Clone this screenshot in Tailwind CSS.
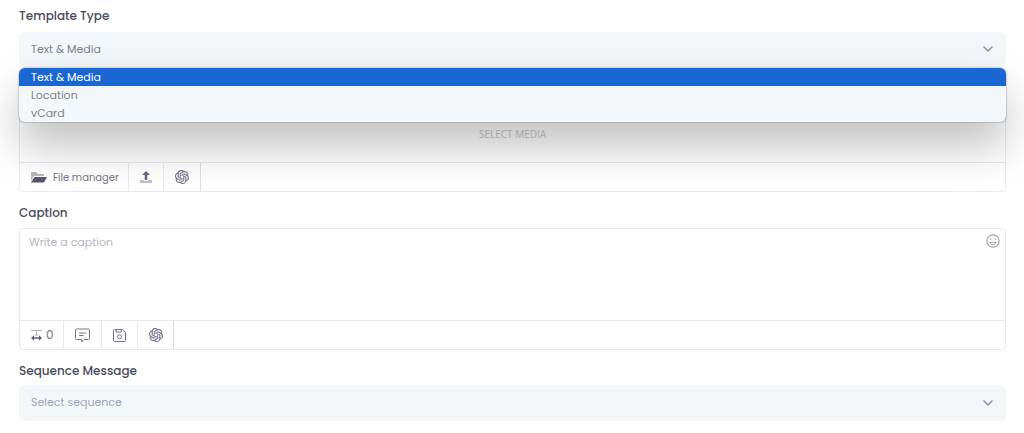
<!DOCTYPE html>
<html lang="en">
<head>
<meta charset="utf-8">
<meta name="viewport" content="width=device-width, initial-scale=1">
<title>Template editor</title>
<script src="https://cdn.jsdelivr.net/npm/@tailwindcss/browser@4"></script>
</head>
<body class="bg-white font-['Poppins','Inter',sans-serif] text-[11px] text-[#7e8299]">
<svg class="hidden" aria-hidden="true">
  <symbol id="knot" viewBox="0 0 24 24"><path fill="currentColor" stroke="currentColor" stroke-width=".4" d="M22.2819 9.8211a5.9847 5.9847 0 0 0-.5157-4.9108 6.0462 6.0462 0 0 0-6.5098-2.9A6.0651 6.0651 0 0 0 4.9807 4.1818a5.9847 5.9847 0 0 0-3.9977 2.9 6.0462 6.0462 0 0 0 .7427 7.0966 5.98 5.98 0 0 0 .511 4.9107 6.051 6.051 0 0 0 6.5146 2.9001A5.9847 5.9847 0 0 0 13.2599 24a6.0557 6.0557 0 0 0 5.7718-4.2058 5.9894 5.9894 0 0 0 3.9977-2.9001 6.0557 6.0557 0 0 0-.7475-7.0729zm-9.022 12.6081a4.4755 4.4755 0 0 1-2.8764-1.0408l.1419-.0804 4.7783-2.7582a.7948.7948 0 0 0 .3927-.6813v-6.7369l2.02 1.1686a.071.071 0 0 1 .038.052v5.5826a4.504 4.504 0 0 1-4.4945 4.4944zm-9.6607-4.1254a4.4708 4.4708 0 0 1-.5346-3.0137l.142.0852 4.783 2.7582a.7712.7712 0 0 0 .7806 0l5.8428-3.3685v2.3324a.0804.0804 0 0 1-.0332.0615L9.74 19.9502a4.4992 4.4992 0 0 1-6.1408-1.6464zM2.3408 7.8956a4.485 4.485 0 0 1 2.3655-1.9728V11.6a.7664.7664 0 0 0 .3879.6765l5.8144 3.3543-2.0201 1.1685a.0757.0757 0 0 1-.071 0l-4.8303-2.7865A4.504 4.504 0 0 1 2.3408 7.872zm16.5963 3.8558L13.1038 8.364 15.1192 7.2a.0757.0757 0 0 1 .071 0l4.8303 2.7913a4.4944 4.4944 0 0 1-.6765 8.1042v-5.6772a.79.79 0 0 0-.407-.667zm2.0107-3.0231l-.142-.0852-4.7735-2.7818a.7759.7759 0 0 0-.7854 0L9.409 9.2297V6.8974a.0662.0662 0 0 1 .0284-.0615l4.8303-2.7866a4.4992 4.4992 0 0 1 6.6802 4.66zM8.3065 12.863l-2.02-1.1638a.0804.0804 0 0 1-.038-.0567V6.0742a4.4992 4.4992 0 0 1 7.3757-3.4537l-.142.0805L8.704 5.459a.7948.7948 0 0 0-.3927.6813zm1.0976-2.3654l2.602-1.4998 2.6069 1.4998v2.9994l-2.5974 1.4997-2.6067-1.4997Z"/></symbol>
  <symbol id="chevron" viewBox="0 0 10 10"><path d="M1 3l4 4 4-4" fill="none" stroke="currentColor" stroke-width="1.5" stroke-linecap="round" stroke-linejoin="round"/></symbol>
</svg>
<form class="flex flex-col pt-2 pr-[18px] pb-3 pl-[19px]">
  <section class="relative">
    <label for="type" class="block text-xs leading-4 font-medium text-[#4b4b5c]">Template Type</label>
    <div class="relative mt-2">
      <select id="type" class="block h-[35px] w-full appearance-none rounded-md bg-[#f4f7fa] px-3 pb-px text-[#7e7f8f] outline-none">
        <option>Text &amp; Media</option><option>Location</option><option>vCard</option>
      </select>
      <svg class="pointer-events-none absolute top-3 right-[13px] size-[10px] text-[#8a8da5]"><use href="#chevron"/></svg>
      <ul role="listbox" aria-label="Template Type" class="absolute inset-x-0 top-full z-10 mt-px overflow-hidden rounded-md bg-[#f4f7fa] leading-[18px] text-[#7e7f8f] shadow-[0_0_2px_rgba(0,0,0,0.5),0_24px_44px_rgba(0,0,0,0.25)]">
        <li role="option" aria-selected="true" class="bg-[#1a66d2] px-3 text-white">Text &amp; Media</li>
        <li role="option" aria-selected="false" class="px-3">Location</li>
        <li role="option" aria-selected="false" class="px-3">vCard</li>
      </ul>
    </div>
  </section>

  <section class="mt-[39px] rounded border border-[#e8e8ee]">
    <div class="flex h-[55px] items-center justify-center font-['Open_Sans',sans-serif] text-[10px] text-[#c9c9ce]">SELECT MEDIA</div>
    <div class="flex h-[29px] border-t border-[#e8e8ee]">
      <button type="button" class="flex w-[109px] items-center gap-1.5 border-r border-[#e8e8ee] pl-[11px] text-[10px] whitespace-nowrap text-[#77788a]">
        <svg class="h-3 w-4 shrink-0" viewBox="0 0 16 12"><path d="M0 10V1h5l2 2h6v2H3z" fill="#b9b9c4"/><path d="M3.5 6H16l-3 5.5H0z" fill="#56566e"/></svg>
        File manager
      </button>
      <button type="button" aria-label="Upload" class="flex w-[35px] items-center justify-center border-r border-[#e8e8ee]">
        <svg class="size-3" viewBox="0 0 12 12"><path d="M0 9h4v1h4V9h4v3H0z" fill="#c2c2cc"/><path d="M6 0l4 4H7.3v5H4.7V4H2z" fill="#6a6a80"/></svg>
      </button>
      <button type="button" aria-label="Generate media with AI" class="flex w-[37px] items-center justify-center border-r border-[#dedee8] text-[#74748a]"><svg class="size-3.5"><use href="#knot"/></svg></button>
    </div>
  </section>

  <section class="mt-[13px]">
    <label for="caption" class="block text-xs leading-4 font-medium text-[#4b4b5c]">Caption</label>
    <div class="mt-[7px] rounded border border-[#e8e8ee]">
      <div class="flex items-start">
        <textarea id="caption" placeholder="Write a caption" class="block h-[91px] min-w-0 flex-1 resize-none px-[9px] py-[5px] leading-4 outline-none placeholder:text-[#b4b5be]"></textarea>
        <button type="button" aria-label="Insert emoji" class="m-[5px] text-[#a3a3a8]">
          <svg class="size-[14px]" viewBox="0 0 14 14" fill="none" stroke="currentColor"><circle cx="7" cy="7" r="6.1" stroke-width="1.2"/><path d="M4.8 4.3v1.9M9.2 4.3v1.9M3.8 8.3h6.4c-.4 1.5-1.6 2.4-3.2 2.4S4.2 9.8 3.8 8.3z"/></svg>
        </button>
      </div>
      <div class="flex h-[29px] border-t border-[#e8e8ee] pb-px text-[#74748a]">
        <div class="-mb-px flex w-11 items-center gap-1 border-r border-[#e8e8ee] pl-[11px] text-xs">
          <svg class="h-3 w-[11px]" viewBox="0 0 11 12"><path d="M0 1.5h11M5.5 1.5V6M3.5 6h4" stroke="#b5b5c0" fill="none"/><path d="M0 9l3-2.7v2h5v-2L11 9l-3 2.7v-2H3v2z" fill="#5e5e74"/></svg>
          <span>0</span>
        </div>
        <button type="button" aria-label="Message templates" class="-mb-px flex w-[38px] items-center justify-center border-r border-[#e8e8ee]">
          <svg class="size-[15px]" viewBox="0 0 15 15" fill="none" stroke="currentColor" stroke-linejoin="round"><path d="M1.5 1h12q1 0 1 1v8.500q0 1-1 1H9L6.500 14v-2.500h-5q-1 0-1-1V2q0-1 1-1zM4 5h7M4 7.500h4.500"/></svg>
        </button>
        <button type="button" aria-label="Save caption" class="-mb-px flex w-9 items-center justify-center border-r border-[#e8e8ee]">
          <svg class="size-[13px]" viewBox="0 0 13 13" fill="none" stroke="currentColor" stroke-linejoin="round"><path d="M1.500.5h8l3 3v8q0 1-1 1h-10q-1 0-1-1v-10q0-1 1-1zM3 .5v2.500h5.500V.5"/><circle cx="6.500" cy="7.800" r="2"/></svg>
        </button>
        <button type="button" aria-label="Generate caption with AI" class="-mb-px flex w-9 items-center justify-center border-r border-[#d6d6e6]"><svg class="size-3.5"><use href="#knot"/></svg></button>
      </div>
    </div>
  </section>

  <section class="mt-[13px]">
    <label for="sequence" class="block text-xs leading-4 font-medium text-[#4b4b5c]">Sequence Message</label>
    <div class="relative mt-1.5">
      <select id="sequence" class="block h-9 w-full appearance-none rounded-md bg-[#f4f7fa] px-3 pb-px text-[#a3a6b8] outline-none"><option>Select sequence</option></select>
      <svg class="pointer-events-none absolute top-[13px] right-[13px] size-[10px] text-[#8a8da5]"><use href="#chevron"/></svg>
    </div>
  </section>
</form>
</body>
</html>
